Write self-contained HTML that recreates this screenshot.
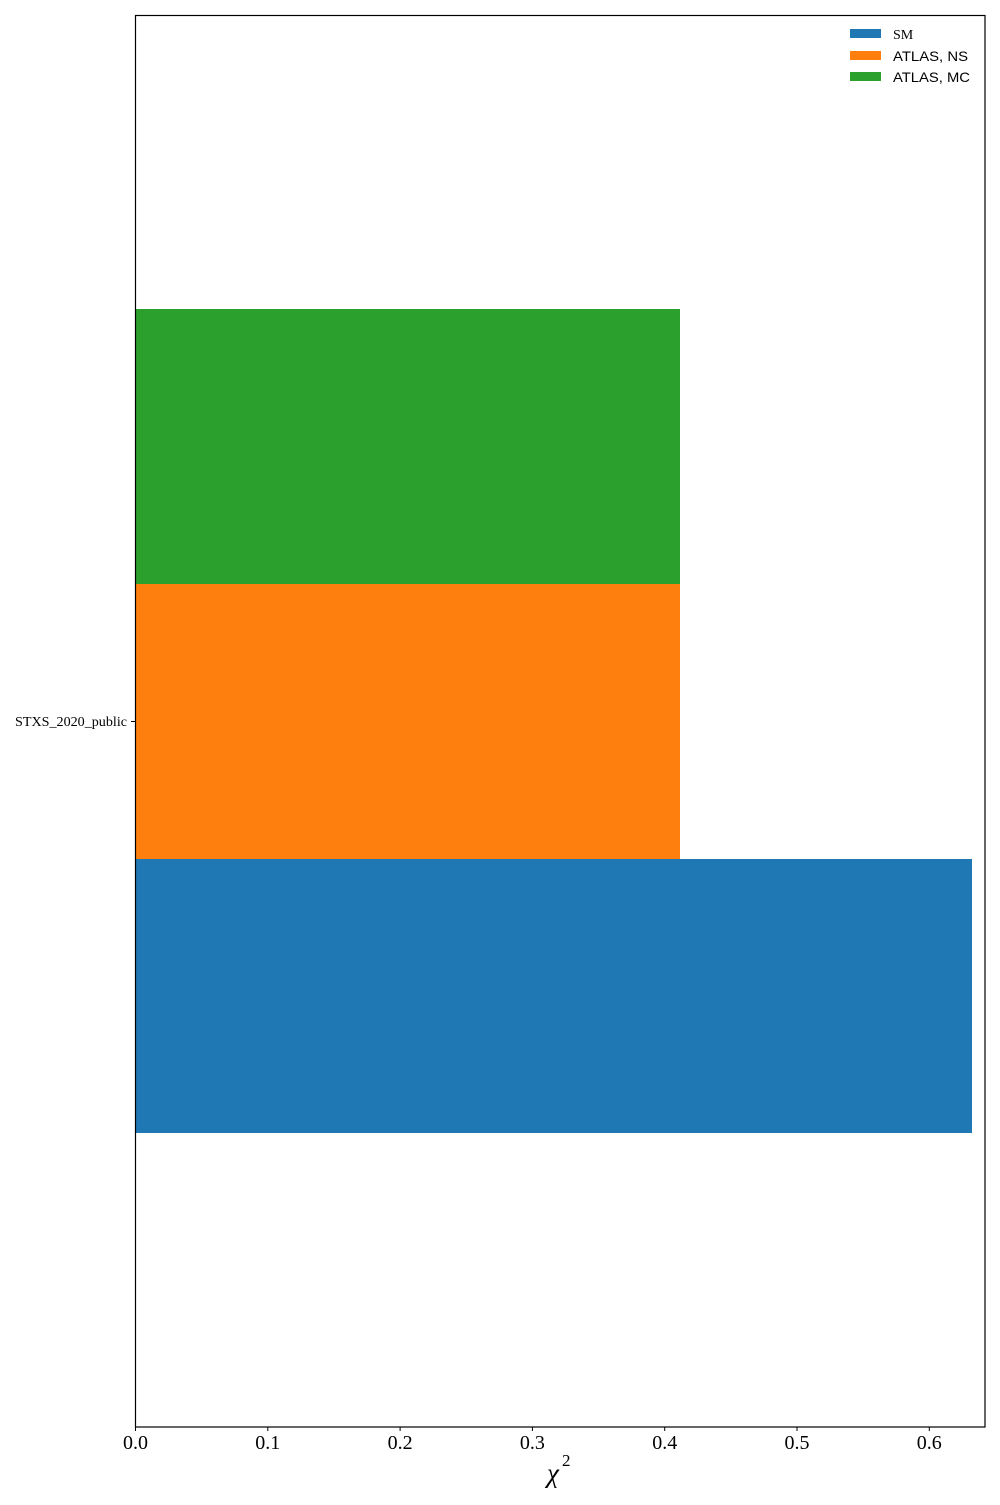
<!DOCTYPE html>
<html><head><meta charset="utf-8"><style>html,body{margin:0;padding:0;background:#fff}</style></head>
<body>
<svg width="1000" height="1500" xmlns="http://www.w3.org/2000/svg" font-family="Liberation Serif, serif">
<rect width="1000" height="1500" fill="#fff"/>
<rect x="135" y="309" width="545" height="275" fill="#2ca02c"/>
<rect x="135" y="584" width="545" height="275" fill="#ff7f0e"/>
<rect x="135" y="859" width="837" height="274" fill="#1f77b4"/>
<rect x="135.5" y="15.5" width="849.5" height="1411.5" fill="none" stroke="#000" stroke-width="1.2"/>
<g stroke="#000" stroke-width="1">
<line x1="135.5" y1="1427" x2="135.5" y2="1431"/>
<line x1="267.8" y1="1427" x2="267.8" y2="1431"/>
<line x1="400.1" y1="1427" x2="400.1" y2="1431"/>
<line x1="532.4" y1="1427" x2="532.4" y2="1431"/>
<line x1="664.7" y1="1427" x2="664.7" y2="1431"/>
<line x1="797" y1="1427" x2="797" y2="1431"/>
<line x1="929.3" y1="1427" x2="929.3" y2="1431"/>
<line x1="131" y1="721.5" x2="135" y2="721.5"/>
</g>
<g font-size="20" text-anchor="middle">
<text x="135.5" y="1449">0.0</text>
<text x="267.8" y="1449">0.1</text>
<text x="400.1" y="1449">0.2</text>
<text x="532.4" y="1449">0.3</text>
<text x="664.7" y="1449">0.4</text>
<text x="797" y="1449">0.5</text>
<text x="929.3" y="1449">0.6</text>
</g>
<text x="547" y="1482" font-size="27" font-style="italic">χ</text>
<text x="562" y="1466" font-size="17">2</text>
<text x="127" y="726" font-size="14" text-anchor="end" textLength="112" lengthAdjust="spacingAndGlyphs">STXS_2020_public</text>
<rect x="850" y="29" width="31" height="9" fill="#1f77b4"/>
<rect x="850" y="51" width="31" height="9" fill="#ff7f0e"/>
<rect x="850" y="72" width="31" height="9" fill="#2ca02c"/>
<text x="893" y="39" font-size="14">SM</text>
<text x="893" y="61" font-size="14" font-family="Liberation Sans, sans-serif" textLength="75" lengthAdjust="spacingAndGlyphs">ATLAS, NS</text>
<text x="893" y="82" font-size="14" font-family="Liberation Sans, sans-serif" textLength="77" lengthAdjust="spacingAndGlyphs">ATLAS, MC</text>
</svg>
</body></html>
